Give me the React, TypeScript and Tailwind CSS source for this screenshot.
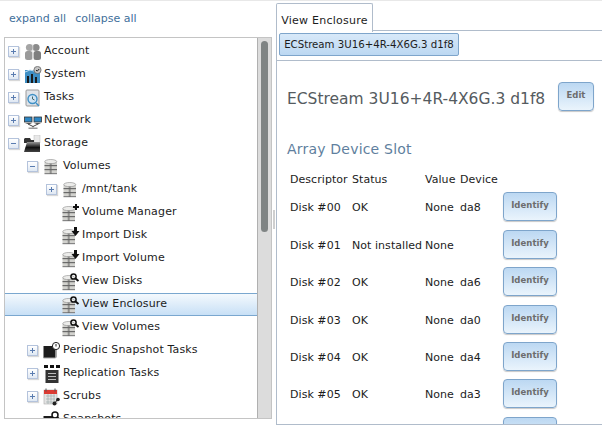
const font = "font-['DejaVu_Sans',sans-serif]";

type IconName =
  | "account"
  | "system"
  | "tasks"
  | "network"
  | "storage"
  | "db"
  | "dbAdd"
  | "dbDown"
  | "dbSearch"
  | "snapshot"
  | "replication"
  | "scrubs"
  | "snapshots";

type TreeRow = {
  label: string;
  indent: number;
  icon: IconName;
  toggle?: "plus" | "minus";
  selected?: boolean;
};

const rows: TreeRow[] = [
  { label: "Account", indent: 0, icon: "account", toggle: "plus" },
  { label: "System", indent: 0, icon: "system", toggle: "plus" },
  { label: "Tasks", indent: 0, icon: "tasks", toggle: "plus" },
  { label: "Network", indent: 0, icon: "network", toggle: "plus" },
  { label: "Storage", indent: 0, icon: "storage", toggle: "minus" },
  { label: "Volumes", indent: 1, icon: "db", toggle: "minus" },
  { label: "/mnt/tank", indent: 2, icon: "db", toggle: "plus" },
  { label: "Volume Manager", indent: 2, icon: "dbAdd" },
  { label: "Import Disk", indent: 2, icon: "dbDown" },
  { label: "Import Volume", indent: 2, icon: "dbDown" },
  { label: "View Disks", indent: 2, icon: "dbSearch" },
  { label: "View Enclosure", indent: 2, icon: "dbSearch", selected: true },
  { label: "View Volumes", indent: 2, icon: "dbSearch" },
  { label: "Periodic Snapshot Tasks", indent: 1, icon: "snapshot", toggle: "plus" },
  { label: "Replication Tasks", indent: 1, icon: "replication", toggle: "plus" },
  { label: "Scrubs", indent: 1, icon: "scrubs", toggle: "plus" },
  { label: "Snapshots", indent: 1, icon: "snapshots" },
];

const disks = [
  { name: "Disk #00", status: "OK", device: "da8", rowClass: "h-[38px]" },
  { name: "Disk #01", status: "Not installed", device: "", rowClass: "h-[37px]" },
  { name: "Disk #02", status: "OK", device: "da6", rowClass: "h-[38px]" },
  { name: "Disk #03", status: "OK", device: "da0", rowClass: "h-[37px]" },
  { name: "Disk #04", status: "OK", device: "da4", rowClass: "h-[37px]" },
  { name: "Disk #05", status: "OK", device: "da3", rowClass: "h-[38px]" },
  { name: "", status: "", device: "", rowClass: "h-[37px]" },
];

function Stack({ x = 0, y = 0 }: { x?: number; y?: number }) {
  return (
    <g transform={`translate(${x} ${y})`}>
      <rect x="0.5" y="2" width="12.5" height="13" rx="1.5" fill="#d2d2ce" />
      <ellipse cx="6.75" cy="2.6" rx="6" ry="2.1" fill="#ececea" stroke="#8a8a8a" strokeWidth="0.6" />
      <rect x="0.5" y="6" width="12.5" height="1.2" fill="#6a6a6a" />
      <rect x="0.5" y="10" width="12.5" height="1.2" fill="#6a6a6a" />
      <rect x="0.5" y="14" width="12.5" height="1.2" fill="#858585" />
      <rect x="5.7" y="4.5" width="2" height="10.5" fill="#66666699" />
    </g>
  );
}

function DbIcon({ overlay }: { overlay?: "add" | "down" | "search" }) {
  return (
    <svg width="18" height="18" viewBox="0 0 18 18">
      <Stack x={overlay ? 0 : 1} y={overlay ? 2 : 1} />
      {overlay === "add" && <path d="M13 0h2v2h2v2h-2v2h-2V4h-2V2h2z" fill="#111" />}
      {overlay === "down" && <path d="M12 0h3v4h2.5l-4 5-4-5H12z" fill="#111" />}
      {overlay === "search" && (
        <g fill="none" stroke="#111">
          <circle cx="11.5" cy="3.5" r="2.6" strokeWidth="1.5" />
          <path d="M13.5 5.5l3 2.5" strokeWidth="2" />
        </g>
      )}
    </svg>
  );
}

function Icon({ name }: { name: IconName }) {
  switch (name) {
    case "account":
      return (
        <svg width="18" height="18" viewBox="0 0 18 18">
          <circle cx="5.5" cy="4.5" r="3.6" fill="#a5a5a5" />
          <circle cx="12" cy="4.5" r="3.6" fill="#8b8b8b" />
          <rect x="1" y="8" width="7.5" height="9" rx="2.5" fill="#9a9a9a" />
          <rect x="9.5" y="8" width="7.5" height="9" rx="2.5" fill="#7f7f7f" />
          <path d="M8.8 1v16" stroke="#e4e4e4" strokeWidth="0.8" />
        </svg>
      );
    case "system":
      return (
        <svg width="18" height="18" viewBox="0 0 18 18">
          <rect x="1" y="4" width="15" height="13" fill="#3f8fc4" />
          <path d="M1 6l5-2 4 1" stroke="#bfe0f4" fill="none" />
          <path d="M3 17v-7h2v7zM7 17V8h2v9zM11 17v-6h2v6z" fill="#1c1c1c" />
          <circle cx="13.5" cy="4" r="3.6" fill="#c4c4c4" stroke="#555" strokeWidth="0.7" />
          <path d="M12 4l1.2 1.2L15.2 3" stroke="#222" fill="none" />
        </svg>
      );
    case "tasks":
      return (
        <svg width="18" height="18" viewBox="0 0 18 18">
          <rect x="2" y="1" width="13" height="16" rx="1" fill="#dfe3e8" stroke="#9a9a9a" />
          <circle cx="8.5" cy="10" r="4.5" fill="#cfe4f5" stroke="#3f8fc4" strokeWidth="1.4" />
          <path d="M8.5 7.5V10l2 1" stroke="#466" fill="none" />
          <path d="M12 14l3 3" stroke="#3f8fc4" strokeWidth="1.4" />
        </svg>
      );
    case "network":
      return (
        <svg width="18" height="18" viewBox="0 0 18 18">
          <rect x="0.5" y="5" width="7.5" height="5" fill="#2f87c4" stroke="#333" strokeWidth="0.8" />
          <rect x="10" y="5" width="7.5" height="5" fill="#2f87c4" stroke="#333" strokeWidth="0.8" />
          <path d="M1 11h7l-3 1.5zM10 11h7l-3 1.5z" fill="#555" />
          <path d="M4 12l5 2.5 5-2.5M9 14.5v1" stroke="#444" fill="none" />
          <rect x="4.5" y="15.5" width="9" height="1.5" fill="#999" />
        </svg>
      );
    case "storage":
      return (
        <svg width="18" height="18" viewBox="0 0 18 18">
          <defs>
            <linearGradient id="folder" x1="0" y1="0" x2="0" y2="1">
              <stop offset="0" stopColor="#999" />
              <stop offset="0.55" stopColor="#111" />
              <stop offset="1" stopColor="#444" />
            </linearGradient>
          </defs>
          <path d="M10 0h6v8h-6z" fill="#e8e8e8" stroke="#bbb" strokeWidth="0.5" />
          <path d="M1 3h5l1 2h3v3H0V4z" fill="#333" />
          <path d="M0 17L3 7h13v10z" fill="url(#folder)" />
        </svg>
      );
    case "db":
      return <DbIcon />;
    case "dbAdd":
      return <DbIcon overlay="add" />;
    case "dbDown":
      return <DbIcon overlay="down" />;
    case "dbSearch":
      return <DbIcon overlay="search" />;
    case "snapshot":
      return (
        <svg width="18" height="18" viewBox="0 0 18 18">
          <rect x="0.5" y="4" width="12" height="12" fill="#1c1c1c" />
          <path d="M0.5 16h12l1-1V5" stroke="#aaa" fill="none" />
          <circle cx="13" cy="4" r="3.6" fill="#fff" stroke="#222" />
          <path d="M13 2v2.5" stroke="#222" />
        </svg>
      );
    case "replication":
      return (
        <svg width="18" height="18" viewBox="0 0 18 18">
          <path d="M1 0h4v3H1zM7 0h4v3H7zM13 0h4v3h-4z" fill="#111" />
          <rect x="2.5" y="5" width="13" height="13" fill="#333" />
          <path d="M5 8h8v1H5zM5 11h8v1H5zM5 14h8v1H5z" fill="#bbb" />
        </svg>
      );
    case "scrubs":
      return (
        <svg width="18" height="18" viewBox="0 0 18 18">
          <rect x="1" y="2" width="13" height="14" fill="#e4e4e4" stroke="#aaa" strokeWidth="0.6" />
          <rect x="1" y="2" width="13" height="4" fill="#dc3b33" />
          <path d="M3 0.5v3M12 0.5v3" stroke="#555" />
          <path d="M3 8h9M3 11h9M3 14h9M5 6v10M8 6v10M11 6v10" stroke="#9aa" strokeWidth="0.6" />
          <circle cx="15" cy="11.5" r="1.8" fill="#222" />
          <circle cx="11.5" cy="15.5" r="2" fill="#222" />
          <path d="M14 12l-2 3" stroke="#222" />
        </svg>
      );
    case "snapshots":
      return (
        <svg width="18" height="18" viewBox="0 0 18 18">
          <rect x="0.5" y="5" width="12" height="12" fill="#1c1c1c" />
          <circle cx="12" cy="4" r="3" fill="#fff" stroke="#111" strokeWidth="1.5" />
          <path d="M14 6l3 3" stroke="#111" strokeWidth="2" />
        </svg>
      );
  }
}

function Toggle({ kind }: { kind: "plus" | "minus" }) {
  return (
    <span className="relative block h-[11px] w-[11px] bg-gradient-to-b from-white to-[#dfe8f3] border border-[#b4c3dc] shadow-[1px_1px_1px_#d8d8d8]">
      <span className="absolute left-[2px] top-[4px] h-px w-[5px] bg-[#5a7cb0]" />
      {kind === "plus" && <span className="absolute left-[4px] top-[2px] h-[5px] w-px bg-[#5a7cb0]" />}
    </span>
  );
}

function Row({ row }: { row: TreeRow }) {
  return (
    <div
      className={
        row.selected
          ? "flex h-[23px] items-center border-y border-[#7aa7cf] bg-gradient-to-b from-[#f4f9fd] to-[#c8e0f6]"
          : "flex h-[23px] items-center"
      }
    >
      <div className={row.indent === 0 ? "w-0" : row.indent === 1 ? "w-[19px]" : "w-[38px]"} />
      <div className="w-[19px] shrink-0 pl-[3px]">{row.toggle && <Toggle kind={row.toggle} />}</div>
      <div className="w-[18px] shrink-0">
        <Icon name={row.icon} />
      </div>
      <span className="ml-[2px] whitespace-nowrap text-[11px] tracking-[0.15px] text-[#1c1c1c]">{row.label}</span>
    </div>
  );
}

function Button({ label, className }: { label: string; className: string }) {
  return (
    <div
      className={`flex items-center justify-center rounded-[4px] border border-[#7ea5cb] bg-gradient-to-b from-[#bcd8f2] to-[#eaf4fc] pb-[2px] text-[8.5px] font-bold text-[#6d6d6d] shadow-[0_1px_1px_#c8c8c8] ${className}`}
    >
      {label}
    </div>
  );
}

export default function App() {
  return (
    <div className={`flex h-[425px] w-[602px] overflow-hidden border-t border-[#e8e8e8] bg-white ${font}`}>
      <div className="flex w-[276px] shrink-0 flex-col">
        <div className="flex h-[36px] items-center gap-[9px] pl-[9px] pt-[1px] text-[11px] text-[#3f6f9b]">
          <span>expand all</span>
          <span>collapse all</span>
        </div>
        <div className="relative ml-[4px] flex h-[382px] w-[268px] overflow-hidden border border-[#c4c4c4]">
          <div className="w-[252px] shrink-0 overflow-hidden pt-[2px]">
            {rows.map((row) => (
              <Row key={row.label} row={row} />
            ))}
          </div>
          <div className="flex-1 border-l border-[#b0b0b0] bg-[#dcdcdc] px-[3px] pt-[3px]">
            <div className="h-[191px] rounded-[4px] bg-[#7f8484]" />
          </div>
        </div>
      </div>

      <div className="relative flex h-[424px] flex-1 flex-col">
        <div className="absolute -left-[3px] top-[209px] h-[19px] w-[2px] bg-[#cfcfcf]" />
        <div className="h-[1px]" />
        <div className="flex h-[29px] items-end">
          <div className="relative z-10 -mb-px flex h-[29px] w-[97px] items-center justify-center rounded-t-[2px] border border-b-0 border-[#b0bccb] bg-white pt-[7px] text-[11px] tracking-[0.25px] text-[#1c1c1c]">
            View Enclosure
          </div>
          <div className="h-px flex-1 bg-[#b0bccb]" />
        </div>
        <div className="flex min-h-0 flex-1 flex-col border-b border-l border-[#b0bccb]">
          <div className="h-[30px] border-b border-[#b0bccb] pl-[2px] pt-[2px]">
            <div className="flex h-[23px] w-[180px] items-center justify-center whitespace-nowrap rounded-[2px] border border-[#7ea5cb] bg-gradient-to-b from-[#d8e9f9] to-[#bcd8f2] text-[10.2px] text-[#1c1c1c]">
              ECStream 3U16+4R-4X6G.3 d1f8
            </div>
          </div>
          <div className="min-h-0 flex-1 overflow-hidden pl-[10px]">
            <div className="mt-[20px] flex h-[30px] items-center">
              <h1 className="w-[271px] whitespace-nowrap pt-[8px] text-[15.5px] font-normal text-[#555b60]">
                ECStream 3U16+4R-4X6G.3 d1f8
              </h1>
              <Button label="Edit" className="h-[29px] w-[36px]" />
            </div>
            <h2 className="mt-[28px] h-[20px] whitespace-nowrap text-[14px] font-normal tracking-[0.2px] text-[#5f7f9e]">
              Array Device Slot
            </h2>
            <div className="ml-[3px] mt-[10px] text-[11px] tracking-[0.05px] text-[#1c1c1c]">
              <div className="grid h-[23px] grid-cols-[62px_73px_35px_1fr] items-center">
                <span>Descriptor</span>
                <span>Status</span>
                <span>Value</span>
                <span>Device</span>
              </div>
              <div>
                {disks.map((disk, i) => (
                  <div key={i} className={`grid grid-cols-[62px_73px_35px_43px_54px] items-start ${disk.rowClass}`}>
                    <span className="pt-[8px]">{disk.name}</span>
                    <span className="whitespace-nowrap pt-[8px]">{disk.status}</span>
                    <span className="pt-[8px]">{disk.name && "None"}</span>
                    <span className="pt-[8px]">{disk.device}</span>
                    <Button label="Identify" className="h-[29px] w-[54px]" />
                  </div>
                ))}
              </div>
            </div>
          </div>
        </div>
      </div>
    </div>
  );
}
